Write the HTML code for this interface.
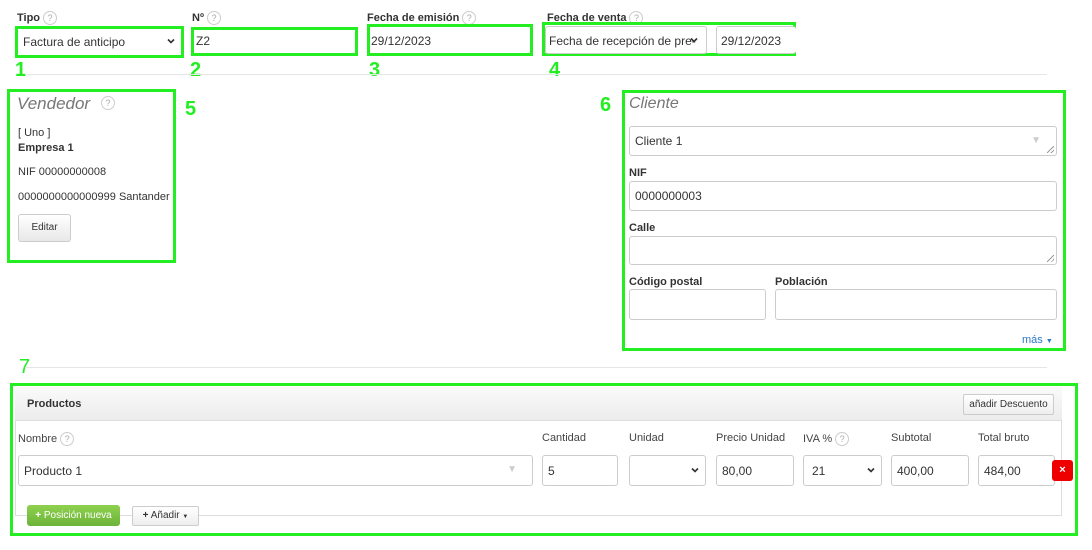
<!DOCTYPE html>
<html><head><meta charset="utf-8"><style>
body{margin:0;width:1092px;height:550px;background:#fff;font-family:"Liberation Sans",sans-serif;color:#333;position:relative;overflow:hidden}
div,span{position:absolute;box-sizing:border-box}
.lb{font-size:11px;font-weight:bold;color:#333}
.q{display:inline-block;position:relative;width:14px;height:14px;border:1px solid #ccc;border-radius:50%;font-size:9px;color:#aaa;text-align:center;line-height:12px;font-weight:normal;vertical-align:middle;margin-left:3px}
.g{border:3px solid #22ee22}
.n{color:#22ee22;font-size:20px;font-weight:bold;line-height:20px}
.in{border:1px solid #ccc;border-radius:3px;background:#fff;font-size:12px;color:#333;padding-left:5px;display:flex;align-items:center}
.sel{background:#fff;border:1px solid #ccc;border-radius:3px}
.hr{height:1px;background:#e6e6e6}
.t{font-size:11px;color:#333;white-space:nowrap}
.chev{right:6px;top:50%;margin-top:-5px;width:8px;height:8px}
.rz{right:2px;bottom:2px;width:7px;height:7px;background:linear-gradient(135deg,transparent 45%,#999 45%,#999 55%,transparent 55%,transparent 75%,#999 75%,#999 85%,transparent 85%)}
.cl{font-size:11px;color:#444;top:432px}
</style></head><body>
<svg width="0" height="0" style="position:absolute"><defs><symbol id="ch" viewBox="0 0 8 8"><path d="M1 2.5L4 5.5L7 2.5" stroke="#333" stroke-width="1.6" fill="none"/></symbol></defs></svg>

<div class="lb" style="left:17px;top:11px">Tipo<span class="q">?</span></div>
<div class="lb" style="left:192px;top:11px">Nº<span class="q">?</span></div>
<div class="lb" style="left:367px;top:11px">Fecha de emisión<span class="q">?</span></div>
<div class="lb" style="left:547px;top:11px">Fecha de venta<span class="q">?</span></div>

<div class="g" style="left:15px;top:26px;width:169px;height:32px"></div>
<div style="left:18px;top:29px;width:163px;height:26px;font-size:12px;padding:6px 0 0 5px">Factura de anticipo<svg class="chev" style="position:absolute"><use href="#ch"/></svg></div>
<div class="g" style="left:191px;top:27px;width:167px;height:29px"></div>
<div style="left:196px;top:34px;font-size:12px">Z2</div>
<div class="g" style="left:367px;top:24px;width:166px;height:32px"></div>
<div style="left:371px;top:34px;font-size:12px">29/12/2023</div>
<div class="g" style="left:542px;top:22px;width:254px;height:34px"></div>
<div class="sel" style="left:545px;top:26px;width:162px;height:28px"></div>
<div style="left:549px;top:34px;font-size:12px;white-space:nowrap">Fecha de recepción de pre-</div>
<svg style="position:absolute;left:690px;top:36px" width="8" height="8"><use href="#ch"/></svg>
<div class="sel" style="left:716px;top:26px;width:80px;height:28px;border-right:none"></div>
<div style="left:721px;top:34px;font-size:12px">29/12/2023</div>

<div class="n" style="left:15px;top:60px">1</div>
<div class="n" style="left:190px;top:60px">2</div>
<div class="n" style="left:369px;top:60px">3</div>
<div class="n" style="left:549px;top:60px">4</div>
<div class="hr" style="left:25px;top:74px;width:1022px"></div>

<div class="g" style="left:7px;top:89px;width:169px;height:174px"></div>
<div style="left:17px;top:94px;font-size:17px;font-style:italic;color:#777">Vendedor</div>
<span class="q" style="position:absolute;left:98px;top:96px">?</span>
<div class="t" style="left:18px;top:127px">[ Uno ]</div>
<div class="t" style="left:18px;top:142px;font-weight:bold">Empresa 1</div>
<div class="t" style="left:18px;top:166px">NIF 00000000008</div>
<div class="t" style="left:18px;top:191px">0000000000000999 Santander</div>
<div style="left:18px;top:214px;width:53px;height:28px;border:1px solid #ccc;border-radius:3px;background:linear-gradient(#fff,#e8e8e8);font-size:10px;text-align:center;line-height:26px">Editar</div>
<div class="n" style="left:185px;top:99px">5</div>

<div class="n" style="left:600px;top:95px">6</div>
<div class="g" style="left:622px;top:90px;width:444px;height:261px"></div>
<div style="left:629px;top:95px;font-size:16px;font-style:italic;color:#777">Cliente</div>
<div class="in" style="left:629px;top:126px;width:428px;height:30px">Cliente 1<span style="right:15px;top:8px;color:#ccc;font-size:10px">▼</span><span class="rz"></span></div>
<div class="lb" style="left:629px;top:167px">NIF</div>
<div class="in" style="left:629px;top:181px;width:428px;height:30px">0000000003</div>
<div class="lb" style="left:629px;top:222px">Calle</div>
<div class="in" style="left:629px;top:236px;width:428px;height:29px"><span class="rz"></span></div>
<div class="lb" style="left:629px;top:276px">Código postal</div>
<div class="lb" style="left:775px;top:276px">Población</div>
<div class="in" style="left:629px;top:289px;width:137px;height:31px"></div>
<div class="in" style="left:775px;top:289px;width:282px;height:31px"></div>
<div style="left:1022px;top:334px;font-size:11px;color:#2a7ac8">más <span style="position:relative;font-size:7px">▼</span></div>

<div class="n" style="left:19px;top:357px;font-weight:normal">7</div>
<div class="hr" style="left:25px;top:367px;width:1022px"></div>

<div class="g" style="left:10px;top:383px;width:1068px;height:153px"></div>
<div style="left:15px;top:387px;width:1047px;height:129px;border:1px solid #ddd;border-top:none"></div>
<div style="left:15px;top:387px;width:1047px;height:34px;background:linear-gradient(#fafafa,#ececec);border-bottom:1px solid #ddd"></div>
<div class="t" style="left:27px;top:398px;font-weight:bold">Productos</div>
<div style="left:963px;top:394px;width:91px;height:21px;border:1px solid #ccc;border-radius:2px;background:linear-gradient(#fff,#eee);font-size:10px;text-align:center;line-height:19px;white-space:nowrap">añadir Descuento</div>

<div class="cl" style="left:18px">Nombre<span class="q">?</span></div>
<div class="cl" style="left:542px">Cantidad</div>
<div class="cl" style="left:629px">Unidad</div>
<div class="cl" style="left:716px">Precio Unidad</div>
<div class="cl" style="left:803px">IVA %<span class="q">?</span></div>
<div class="cl" style="left:891px">Subtotal</div>
<div class="cl" style="left:978px">Total bruto</div>

<div class="in" style="left:18px;top:455px;width:515px;height:31px">Producto 1<span style="right:15px;top:8px;color:#ccc;font-size:10px">▼</span></div>
<div class="in" style="left:542px;top:455px;width:76px;height:31px">5</div>
<div class="in" style="left:629px;top:455px;width:77px;height:31px"><svg class="chev" style="position:absolute"><use href="#ch"/></svg></div>
<div class="in" style="left:716px;top:455px;width:78px;height:31px">80,00</div>
<div class="in" style="left:803px;top:455px;width:79px;height:31px;padding-left:8px">21<svg class="chev" style="position:absolute"><use href="#ch"/></svg></div>
<div class="in" style="left:891px;top:455px;width:78px;height:31px">400,00</div>
<div class="in" style="left:978px;top:455px;width:77px;height:31px">484,00</div>
<div style="left:1052px;top:460px;width:21px;height:21px;background:#e00;border-radius:3px;color:#fff;font-size:11px;font-weight:bold;text-align:center;line-height:20px">×</div>

<div style="left:27px;top:505px;width:93px;height:21px;background:linear-gradient(#8fd14f,#6cb33a);border-radius:3px;color:#fff;font-size:10px;text-align:center;line-height:21px;white-space:nowrap"><b>+</b> Posición nueva</div>
<div style="left:132px;top:506px;width:67px;height:20px;border:1px solid #ccc;border-radius:2px;background:linear-gradient(#fff,#eee);font-size:10px;text-align:center;line-height:18px;white-space:nowrap"><b>+</b> Añadir <span style="position:relative;font-size:6px">▼</span></div>
</body></html>
